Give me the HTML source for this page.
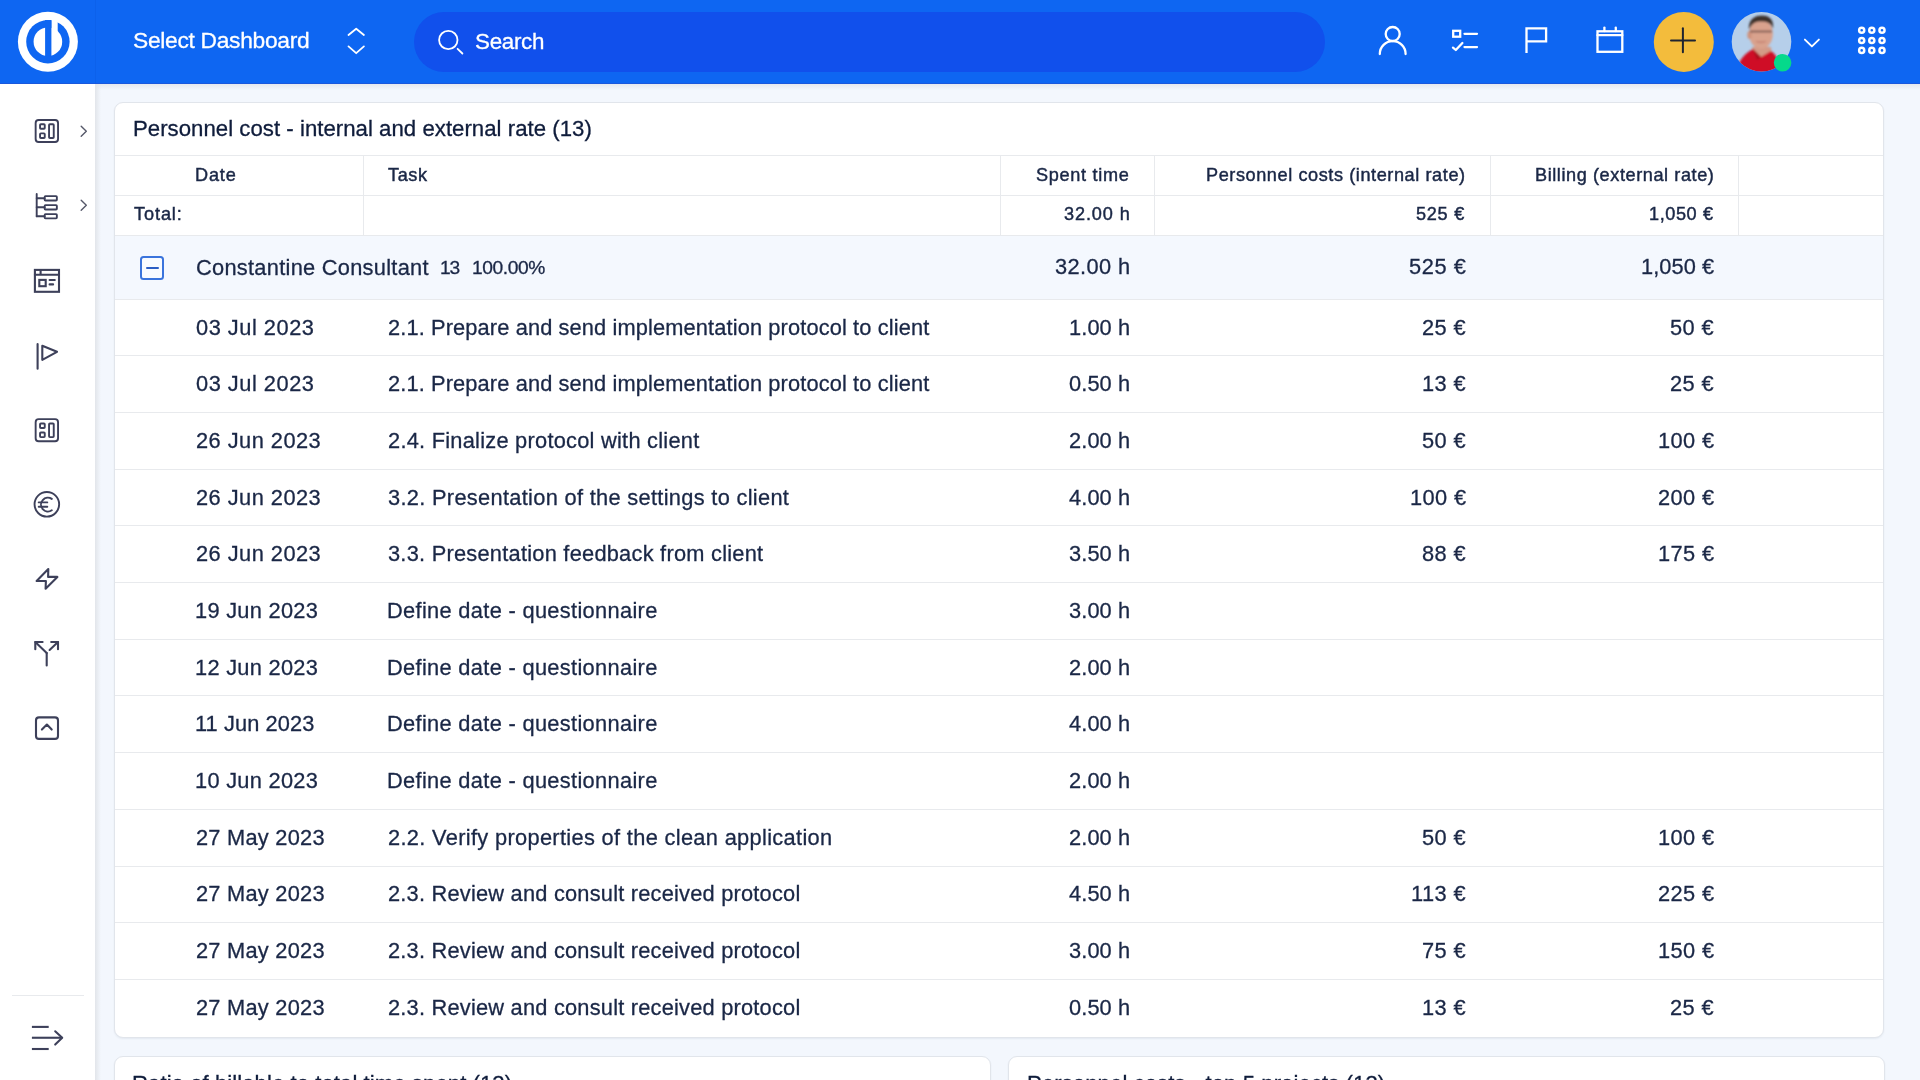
<!DOCTYPE html>
<html><head><meta charset="utf-8"><title>Personnel cost</title>
<style>
html,body{margin:0;padding:0;}
body{width:1920px;height:1080px;overflow:hidden;position:relative;background:#f3f7fd;font-family:"Liberation Sans", sans-serif;}
.t{position:absolute;white-space:nowrap;will-change:transform;}
.abs{position:absolute;}
svg{position:absolute;overflow:visible;}
</style></head><body>
<div class="abs" style="left:0;top:0;width:1920px;height:84px;background:#0e66f2;"></div>
<div class="abs" style="left:95px;top:0;width:1px;height:84px;background:#0b5de6;opacity:.6"></div>
<svg style="left:0;top:0" width="95" height="84" viewBox="0 0 95 84">
<circle cx="47.9" cy="41.7" r="30" fill="#fff"/>
<circle cx="47.9" cy="41.7" r="21.7" fill="#0e66f2"/>
<circle cx="47.9" cy="41.7" r="14.3" fill="#fff"/>
<rect x="51.4" y="15" width="6.3" height="20" fill="#fff"/>
<rect x="45.1" y="20" width="6.3" height="36" fill="#0e66f2"/>
</svg>
<svg style="left:0;top:0" width="400" height="84"><g fill="none" stroke="#fff" stroke-width="1.8" stroke-linecap="round" stroke-linejoin="round">
<polyline points="348.5,35 356.2,28.7 363.9,35"/><polyline points="348.5,46.4 356.2,53.2 363.9,46.4"/></g></svg>
<div class="abs" style="left:414px;top:12px;width:911px;height:60px;border-radius:30px;background:#1150ec;"></div>
<svg style="left:0;top:0" width="600" height="84"><g fill="none" stroke="#fff" stroke-width="1.8" stroke-linecap="round">
<circle cx="448.3" cy="40" r="9.2"/><line x1="457.6" y1="48.8" x2="462.4" y2="53.5"/></g></svg>
<svg style="left:0;top:0" width="1920" height="84"><g fill="none" stroke="#fff" stroke-width="2.3" stroke-linecap="round" stroke-linejoin="round">
<circle cx="1392.7" cy="34" r="7"/>
<path d="M1379.8 54 A12.9 12.9 0 0 1 1405.6 54"/>
<rect x="1453.2" y="30.8" width="7" height="5.9" stroke-linecap="butt" stroke-linejoin="miter"/>
<line x1="1464.5" y1="33.8" x2="1477" y2="33.8"/>
<line x1="1464.5" y1="47.1" x2="1477" y2="47.1"/>
<polyline points="1453,47.6 1455.8,50 1462.4,43"/>
<path d="M1526.5 53 V28.4 H1546.1 V41.4 H1526.5" stroke-linecap="butt" stroke-linejoin="miter"/>
<rect x="1597.5" y="31.3" width="24.8" height="20.5" stroke-linejoin="miter"/>
<line x1="1597.5" y1="35.2" x2="1622.3" y2="35.2"/>
<line x1="1604.4" y1="27.6" x2="1604.4" y2="31"/>
<line x1="1615.8" y1="27.6" x2="1615.8" y2="31"/>
</g>
<circle cx="1683.8" cy="41.9" r="30" fill="#f3bc3c"/>
<g stroke="#1f2430" stroke-width="2" stroke-linecap="round"><line x1="1671" y1="40.4" x2="1695" y2="40.4"/><line x1="1682.9" y1="28.3" x2="1682.9" y2="52.2"/></g>
<g fill="none" stroke="#fff" stroke-width="1.9" stroke-linecap="round" stroke-linejoin="round"><polyline points="1804.9,39.6 1811.9,46.4 1818.9,39.6"/></g>
<g fill="none" stroke="#fff" stroke-width="2.5">
<circle cx="1861.7" cy="30.3" r="2.55"/><circle cx="1871.8" cy="30.3" r="2.55"/><circle cx="1882" cy="30.3" r="2.55"/>
<circle cx="1861.7" cy="40.5" r="2.55"/><circle cx="1871.8" cy="40.5" r="2.55"/><circle cx="1882" cy="40.5" r="2.55"/>
<circle cx="1861.7" cy="50.4" r="2.55"/><circle cx="1871.8" cy="50.4" r="2.55"/><circle cx="1882" cy="50.4" r="2.55"/>
</g>
<defs><clipPath id="av"><circle cx="1761.5" cy="41.7" r="29.8"/></clipPath>
<filter id="bl" x="-20%" y="-20%" width="140%" height="140%"><feGaussianBlur stdDeviation="1.1"/></filter></defs>
<circle cx="1761.5" cy="41.7" r="29.8" fill="#b6cfea"/>
<g clip-path="url(#av)"><g filter="url(#bl)">
<path d="M1752 47 L1771 47 L1772 58 L1752 58 Z" fill="#d39a86"/>
<path d="M1736 76 L1740 61 Q1745 53 1753 49 L1761 57 L1771 51 Q1777 55 1778 62 L1780 76 Z" fill="#cf0c26"/>
<path d="M1753 49 L1761 57 L1757 60 Z" fill="#a8081c"/>
<ellipse cx="1761" cy="34" rx="11.8" ry="14.8" fill="#d9a28d"/>
<ellipse cx="1749.5" cy="35" rx="2.2" ry="4" fill="#cf937e"/>
<path d="M1749 30 C1748 20 1754 15.5 1762 15.5 C1770 15.5 1774 20 1773 29 C1771 23 1767 21.5 1761 21.5 C1755 21.5 1751 24 1749 30 Z" fill="#3e302b"/>
<path d="M1750 31.5 L1772 31.5" stroke="#6b4a44" stroke-width="1.6"/>
<path d="M1756 41.5 Q1761 43 1766 41.5" stroke="#c0786a" stroke-width="1.3" fill="none"/>
</g></g>
<circle cx="1782.6" cy="62.8" r="8.8" fill="#05d98b"/>
</svg>
<div class="abs" style="left:0;top:84px;width:95px;height:996px;background:#fff;"></div>
<div class="abs" style="left:95px;top:84px;width:1825px;height:6px;background:linear-gradient(to bottom,#e6e9ee,rgba(243,247,253,0));"></div>
<div class="abs" style="left:95px;top:84px;width:6px;height:996px;background:linear-gradient(to right,#e2e5ea,rgba(243,247,253,0));"></div>
<div class="abs" style="left:0;top:82.6px;width:1920px;height:1.4px;background:#1a58dc;"></div>
<svg style="left:0;top:0" width="100" height="1080"><g fill="none" stroke="#3d405a" stroke-width="2.1" stroke-linecap="round" stroke-linejoin="round">
<g id="dash1" stroke-width="1.9"><rect x="35.65" y="119.95" width="22.4" height="22.1" rx="3"/>
<rect x="40.05" y="124.25" width="4.7" height="4.5" rx="0.8"/>
<rect x="40.05" y="133.35" width="4.7" height="4.6" rx="0.8"/>
<rect x="49.05" y="124.25" width="4.7" height="13.7" rx="0.8"/></g>
<polyline points="81.2,126.3 86.3,131.3 81.2,136.3" stroke-width="1.4" stroke="#555869"/>
<g stroke-width="1.9"><line x1="36.7" y1="194" x2="36.7" y2="216.2"/>
<line x1="36.7" y1="198.3" x2="44.6" y2="198.3"/>
<line x1="36.7" y1="207.3" x2="44.6" y2="207.3"/>
<line x1="36.7" y1="216.2" x2="44.6" y2="216.2"/>
<rect x="44.65" y="196.15" width="12.2" height="4.4" rx="0.8"/>
<rect x="44.65" y="205.15" width="12.2" height="4.4" rx="0.8"/>
<rect x="44.65" y="214.15" width="12.2" height="4.2" rx="0.8"/></g>
<polyline points="81.2,200.3 86.3,205.3 81.2,210.3" stroke-width="1.4" stroke="#555869"/>
<rect x="34.9" y="269.9" width="24.1" height="21.9" stroke-linejoin="miter"/>
<line x1="34.9" y1="274.8" x2="59" y2="274.8"/>
<line x1="40.6" y1="269.9" x2="40.6" y2="274.8" stroke-linecap="butt"/>
<rect x="39.3" y="279.9" width="6.4" height="6.3" stroke-linejoin="miter"/>
<line x1="49.6" y1="280" x2="54.8" y2="280"/>
<line x1="49.6" y1="284.4" x2="53.1" y2="284.4"/>
<line x1="37.6" y1="344" x2="37.6" y2="368.8"/>
<polygon points="42.3,345.8 57,351.8 42.3,359.8"/>
<use href="#dash1" transform="translate(0,299.2)"/>
<circle cx="46.85" cy="504.3" r="12.3" stroke-width="1.9"/>
<path d="M51.8 498.9 A6.9 6.9 0 1 0 51.8 510.3" stroke-width="1.9"/>
<line x1="38.7" y1="502.4" x2="47.3" y2="502.4" stroke-width="1.9"/>
<line x1="38.7" y1="506.8" x2="47.3" y2="506.8" stroke-width="1.9"/>
<polygon points="48.3,569 36.6,581 45.9,581 45.6,588.8 57.4,576.9 48.1,576.9"/>
<line x1="46.7" y1="665.5" x2="46.7" y2="653"/>
<polyline points="46.7,653 35.3,642 "/>
<line x1="49.6" y1="650" x2="58" y2="642"/>
<polyline points="42.6,642 35.3,642 35.3,649.2"/>
<polyline points="51.2,642 58,642 58,649.2"/>
<rect x="36" y="717.4" width="22" height="21.5" rx="3"/>
<polyline points="41.9,729.6 46.9,724.6 51.7,729.6"/>
<line x1="31.9" y1="1026.9" x2="48.7" y2="1026.9" stroke-linecap="butt"/>
<line x1="31.9" y1="1049" x2="48.7" y2="1049" stroke-linecap="butt"/>
<line x1="31.9" y1="1037.75" x2="62.2" y2="1037.75" stroke-linecap="butt"/>
<polyline points="55.2,1031.3 62.2,1037.8 55.2,1044.6"/>
</g>
<rect x="12" y="995" width="72" height="1" fill="#e8eaed"/>
</svg>
<div class="abs" style="left:114px;top:101.5px;width:1768px;height:934px;border:1px solid #e1e5eb;border-radius:9px;background:#fff;box-shadow:0 1px 2px rgba(30,50,90,.07);"></div>
<div class="abs" style="left:115px;top:235.4px;width:1768px;height:63.8px;background:#f4f8fe;"></div>
<div class="abs" style="left:115px;top:155px;width:1768px;height:1px;background:#e8eaed;"></div>
<div class="abs" style="left:115px;top:195px;width:1768px;height:1px;background:#e8eaed;"></div>
<div class="abs" style="left:115px;top:235px;width:1768px;height:1px;background:#e8eaed;"></div>
<div class="abs" style="left:115px;top:299px;width:1768px;height:1px;background:#e8eaed;"></div>
<div class="abs" style="left:115px;top:355px;width:1768px;height:1px;background:#e8eaed;"></div>
<div class="abs" style="left:115px;top:412px;width:1768px;height:1px;background:#e8eaed;"></div>
<div class="abs" style="left:115px;top:469px;width:1768px;height:1px;background:#e8eaed;"></div>
<div class="abs" style="left:115px;top:525px;width:1768px;height:1px;background:#e8eaed;"></div>
<div class="abs" style="left:115px;top:582px;width:1768px;height:1px;background:#e8eaed;"></div>
<div class="abs" style="left:115px;top:639px;width:1768px;height:1px;background:#e8eaed;"></div>
<div class="abs" style="left:115px;top:695px;width:1768px;height:1px;background:#e8eaed;"></div>
<div class="abs" style="left:115px;top:752px;width:1768px;height:1px;background:#e8eaed;"></div>
<div class="abs" style="left:115px;top:809px;width:1768px;height:1px;background:#e8eaed;"></div>
<div class="abs" style="left:115px;top:866px;width:1768px;height:1px;background:#e8eaed;"></div>
<div class="abs" style="left:115px;top:922px;width:1768px;height:1px;background:#e8eaed;"></div>
<div class="abs" style="left:115px;top:979px;width:1768px;height:1px;background:#e8eaed;"></div>
<div class="abs" style="left:363px;top:155px;width:1px;height:80px;background:#e8eaed;"></div>
<div class="abs" style="left:1000px;top:155px;width:1px;height:80px;background:#e8eaed;"></div>
<div class="abs" style="left:1154px;top:155px;width:1px;height:80px;background:#e8eaed;"></div>
<div class="abs" style="left:1490px;top:155px;width:1px;height:80px;background:#e8eaed;"></div>
<div class="abs" style="left:1738px;top:155px;width:1px;height:80px;background:#e8eaed;"></div>
<div class="abs" style="left:140.2px;top:255.7px;width:24.3px;height:24.1px;box-sizing:border-box;border:2px solid #3a74dc;border-radius:3.5px;background:#f8fbff;"></div>
<div class="abs" style="left:146.3px;top:266.9px;width:12.4px;height:1.8px;border-radius:1px;background:#2b5ec4;"></div>
<div class="abs" style="left:114px;top:1055.8px;width:875px;height:100px;border:1px solid #e1e5eb;border-radius:9px;background:#fff;box-shadow:0 1px 2px rgba(30,50,90,.07);"></div>
<div class="abs" style="left:1007.5px;top:1055.8px;width:875px;height:100px;border:1px solid #e1e5eb;border-radius:9px;background:#fff;box-shadow:0 1px 2px rgba(30,50,90,.07);"></div>
<div class="t" style="left:132.80px;top:27.40px;font-size:22.8px;line-height:27px;letter-spacing:-0.304px;color:#fff;-webkit-text-stroke:0.3px currentColor;">Select Dashboard</div>
<div class="t" style="left:474.80px;top:27.54px;font-size:22.4px;line-height:27px;letter-spacing:-0.303px;color:#fff;-webkit-text-stroke:0.3px currentColor;">Search</div>
<div class="t" style="left:132.60px;top:114.81px;font-size:22.2px;line-height:27px;letter-spacing:0.027px;color:#0f1c3b;-webkit-text-stroke:0.3px currentColor;">Personnel cost - internal and external rate (13)</div>
<div class="t" style="left:195.30px;top:163.83px;font-size:18.1px;line-height:22px;letter-spacing:0.845px;color:#1a2746;-webkit-text-stroke:0.45px currentColor;">Date</div>
<div class="t" style="left:387.90px;top:163.83px;font-size:18.1px;line-height:22px;letter-spacing:0.611px;color:#1a2746;-webkit-text-stroke:0.45px currentColor;">Task</div>
<div class="t" style="left:1036.30px;top:163.83px;font-size:18.1px;line-height:22px;letter-spacing:0.716px;color:#1a2746;-webkit-text-stroke:0.45px currentColor;">Spent time</div>
<div class="t" style="left:1206.00px;top:163.83px;font-size:18.1px;line-height:22px;letter-spacing:0.590px;color:#1a2746;-webkit-text-stroke:0.45px currentColor;">Personnel costs (internal rate)</div>
<div class="t" style="left:1534.60px;top:163.83px;font-size:18.1px;line-height:22px;letter-spacing:0.588px;color:#1a2746;-webkit-text-stroke:0.45px currentColor;">Billing (external rate)</div>
<div class="t" style="left:133.80px;top:203.03px;font-size:18.1px;line-height:22px;letter-spacing:0.913px;color:#1a2746;-webkit-text-stroke:0.45px currentColor;">Total:</div>
<div class="t" style="left:1063.60px;top:203.33px;font-size:18.1px;line-height:22px;letter-spacing:0.896px;color:#1a2746;-webkit-text-stroke:0.45px currentColor;">32.00 h</div>
<div class="t" style="left:1416.00px;top:203.03px;font-size:18.1px;line-height:22px;letter-spacing:0.743px;color:#1a2746;-webkit-text-stroke:0.45px currentColor;">525 €</div>
<div class="t" style="left:1648.70px;top:203.03px;font-size:18.1px;line-height:22px;letter-spacing:0.596px;color:#1a2746;-webkit-text-stroke:0.45px currentColor;">1,050 €</div>
<div class="t" style="left:195.60px;top:254.75px;font-size:21.8px;line-height:26px;letter-spacing:0.283px;color:#1a2746;-webkit-text-stroke:0.3px currentColor;">Constantine Consultant</div>
<div class="t" style="left:440.00px;top:256.45px;font-size:19.2px;line-height:23px;letter-spacing:-1.178px;color:#1a2746;-webkit-text-stroke:0.3px currentColor;">13</div>
<div class="t" style="left:471.80px;top:256.45px;font-size:19.2px;line-height:23px;letter-spacing:-0.404px;color:#1a2746;-webkit-text-stroke:0.3px currentColor;">100.00%</div>
<div class="t" style="left:1055.10px;top:253.95px;font-size:21.8px;line-height:26px;letter-spacing:0.382px;color:#1a2746;-webkit-text-stroke:0.3px currentColor;">32.00 h</div>
<div class="t" style="left:1409.20px;top:254.05px;font-size:21.8px;line-height:26px;letter-spacing:0.568px;color:#1a2746;-webkit-text-stroke:0.3px currentColor;">525 €</div>
<div class="t" style="left:1640.70px;top:254.05px;font-size:21.8px;line-height:26px;letter-spacing:0.082px;color:#1a2746;-webkit-text-stroke:0.3px currentColor;">1,050 €</div>
<div class="t" style="left:196.10px;top:314.65px;font-size:21.8px;line-height:26px;letter-spacing:0.520px;color:#1a2746;-webkit-text-stroke:0.3px currentColor;">03 Jul 2023</div>
<div class="t" style="left:388.00px;top:314.65px;font-size:21.8px;line-height:26px;letter-spacing:0.127px;color:#1a2746;-webkit-text-stroke:0.3px currentColor;">2.1. Prepare and send implementation protocol to client</div>
<div class="t" style="left:1068.91px;top:314.65px;font-size:21.8px;line-height:26px;letter-spacing:0.100px;color:#1a2746;-webkit-text-stroke:0.3px currentColor;">1.00 h</div>
<div class="t" style="left:1422.40px;top:314.65px;font-size:21.8px;line-height:26px;letter-spacing:0.400px;color:#1a2746;-webkit-text-stroke:0.3px currentColor;">25 €</div>
<div class="t" style="left:1670.30px;top:314.65px;font-size:21.8px;line-height:26px;letter-spacing:0.400px;color:#1a2746;-webkit-text-stroke:0.3px currentColor;">50 €</div>
<div class="t" style="left:196.10px;top:371.33px;font-size:21.8px;line-height:26px;letter-spacing:0.520px;color:#1a2746;-webkit-text-stroke:0.3px currentColor;">03 Jul 2023</div>
<div class="t" style="left:388.00px;top:371.33px;font-size:21.8px;line-height:26px;letter-spacing:0.127px;color:#1a2746;-webkit-text-stroke:0.3px currentColor;">2.1. Prepare and send implementation protocol to client</div>
<div class="t" style="left:1068.91px;top:371.33px;font-size:21.8px;line-height:26px;letter-spacing:0.100px;color:#1a2746;-webkit-text-stroke:0.3px currentColor;">0.50 h</div>
<div class="t" style="left:1422.40px;top:371.33px;font-size:21.8px;line-height:26px;letter-spacing:0.400px;color:#1a2746;-webkit-text-stroke:0.3px currentColor;">13 €</div>
<div class="t" style="left:1670.30px;top:371.33px;font-size:21.8px;line-height:26px;letter-spacing:0.400px;color:#1a2746;-webkit-text-stroke:0.3px currentColor;">25 €</div>
<div class="t" style="left:195.90px;top:428.01px;font-size:21.8px;line-height:26px;letter-spacing:0.472px;color:#1a2746;-webkit-text-stroke:0.3px currentColor;">26 Jun 2023</div>
<div class="t" style="left:388.00px;top:428.01px;font-size:21.8px;line-height:26px;letter-spacing:0.253px;color:#1a2746;-webkit-text-stroke:0.3px currentColor;">2.4. Finalize protocol with client</div>
<div class="t" style="left:1068.91px;top:428.01px;font-size:21.8px;line-height:26px;letter-spacing:0.100px;color:#1a2746;-webkit-text-stroke:0.3px currentColor;">2.00 h</div>
<div class="t" style="left:1422.40px;top:428.01px;font-size:21.8px;line-height:26px;letter-spacing:0.400px;color:#1a2746;-webkit-text-stroke:0.3px currentColor;">50 €</div>
<div class="t" style="left:1657.77px;top:428.01px;font-size:21.8px;line-height:26px;letter-spacing:0.400px;color:#1a2746;-webkit-text-stroke:0.3px currentColor;">100 €</div>
<div class="t" style="left:195.90px;top:484.69px;font-size:21.8px;line-height:26px;letter-spacing:0.472px;color:#1a2746;-webkit-text-stroke:0.3px currentColor;">26 Jun 2023</div>
<div class="t" style="left:388.20px;top:484.69px;font-size:21.8px;line-height:26px;letter-spacing:0.313px;color:#1a2746;-webkit-text-stroke:0.3px currentColor;">3.2. Presentation of the settings to client</div>
<div class="t" style="left:1068.91px;top:484.69px;font-size:21.8px;line-height:26px;letter-spacing:0.100px;color:#1a2746;-webkit-text-stroke:0.3px currentColor;">4.00 h</div>
<div class="t" style="left:1409.87px;top:484.69px;font-size:21.8px;line-height:26px;letter-spacing:0.400px;color:#1a2746;-webkit-text-stroke:0.3px currentColor;">100 €</div>
<div class="t" style="left:1657.77px;top:484.69px;font-size:21.8px;line-height:26px;letter-spacing:0.400px;color:#1a2746;-webkit-text-stroke:0.3px currentColor;">200 €</div>
<div class="t" style="left:195.90px;top:541.37px;font-size:21.8px;line-height:26px;letter-spacing:0.472px;color:#1a2746;-webkit-text-stroke:0.3px currentColor;">26 Jun 2023</div>
<div class="t" style="left:388.20px;top:541.37px;font-size:21.8px;line-height:26px;letter-spacing:0.249px;color:#1a2746;-webkit-text-stroke:0.3px currentColor;">3.3. Presentation feedback from client</div>
<div class="t" style="left:1068.91px;top:541.37px;font-size:21.8px;line-height:26px;letter-spacing:0.100px;color:#1a2746;-webkit-text-stroke:0.3px currentColor;">3.50 h</div>
<div class="t" style="left:1422.40px;top:541.37px;font-size:21.8px;line-height:26px;letter-spacing:0.400px;color:#1a2746;-webkit-text-stroke:0.3px currentColor;">88 €</div>
<div class="t" style="left:1657.77px;top:541.37px;font-size:21.8px;line-height:26px;letter-spacing:0.400px;color:#1a2746;-webkit-text-stroke:0.3px currentColor;">175 €</div>
<div class="t" style="left:195.30px;top:598.05px;font-size:21.8px;line-height:26px;letter-spacing:0.282px;color:#1a2746;-webkit-text-stroke:0.3px currentColor;">19 Jun 2023</div>
<div class="t" style="left:387.30px;top:598.05px;font-size:21.8px;line-height:26px;letter-spacing:0.329px;color:#1a2746;-webkit-text-stroke:0.3px currentColor;">Define date - questionnaire</div>
<div class="t" style="left:1068.91px;top:598.05px;font-size:21.8px;line-height:26px;letter-spacing:0.100px;color:#1a2746;-webkit-text-stroke:0.3px currentColor;">3.00 h</div>
<div class="t" style="left:195.30px;top:654.73px;font-size:21.8px;line-height:26px;letter-spacing:0.282px;color:#1a2746;-webkit-text-stroke:0.3px currentColor;">12 Jun 2023</div>
<div class="t" style="left:387.30px;top:654.73px;font-size:21.8px;line-height:26px;letter-spacing:0.329px;color:#1a2746;-webkit-text-stroke:0.3px currentColor;">Define date - questionnaire</div>
<div class="t" style="left:1068.91px;top:654.73px;font-size:21.8px;line-height:26px;letter-spacing:0.100px;color:#1a2746;-webkit-text-stroke:0.3px currentColor;">2.00 h</div>
<div class="t" style="left:195.30px;top:711.41px;font-size:21.8px;line-height:26px;letter-spacing:0.104px;color:#1a2746;-webkit-text-stroke:0.3px currentColor;">11 Jun 2023</div>
<div class="t" style="left:387.30px;top:711.41px;font-size:21.8px;line-height:26px;letter-spacing:0.329px;color:#1a2746;-webkit-text-stroke:0.3px currentColor;">Define date - questionnaire</div>
<div class="t" style="left:1068.91px;top:711.41px;font-size:21.8px;line-height:26px;letter-spacing:0.100px;color:#1a2746;-webkit-text-stroke:0.3px currentColor;">4.00 h</div>
<div class="t" style="left:195.30px;top:768.09px;font-size:21.8px;line-height:26px;letter-spacing:0.282px;color:#1a2746;-webkit-text-stroke:0.3px currentColor;">10 Jun 2023</div>
<div class="t" style="left:387.30px;top:768.09px;font-size:21.8px;line-height:26px;letter-spacing:0.329px;color:#1a2746;-webkit-text-stroke:0.3px currentColor;">Define date - questionnaire</div>
<div class="t" style="left:1068.91px;top:768.09px;font-size:21.8px;line-height:26px;letter-spacing:0.100px;color:#1a2746;-webkit-text-stroke:0.3px currentColor;">2.00 h</div>
<div class="t" style="left:195.90px;top:824.77px;font-size:21.8px;line-height:26px;letter-spacing:0.248px;color:#1a2746;-webkit-text-stroke:0.3px currentColor;">27 May 2023</div>
<div class="t" style="left:388.00px;top:824.77px;font-size:21.8px;line-height:26px;letter-spacing:0.331px;color:#1a2746;-webkit-text-stroke:0.3px currentColor;">2.2. Verify properties of the clean application</div>
<div class="t" style="left:1068.91px;top:824.77px;font-size:21.8px;line-height:26px;letter-spacing:0.100px;color:#1a2746;-webkit-text-stroke:0.3px currentColor;">2.00 h</div>
<div class="t" style="left:1422.40px;top:824.77px;font-size:21.8px;line-height:26px;letter-spacing:0.400px;color:#1a2746;-webkit-text-stroke:0.3px currentColor;">50 €</div>
<div class="t" style="left:1657.77px;top:824.77px;font-size:21.8px;line-height:26px;letter-spacing:0.400px;color:#1a2746;-webkit-text-stroke:0.3px currentColor;">100 €</div>
<div class="t" style="left:195.90px;top:881.45px;font-size:21.8px;line-height:26px;letter-spacing:0.248px;color:#1a2746;-webkit-text-stroke:0.3px currentColor;">27 May 2023</div>
<div class="t" style="left:388.00px;top:881.45px;font-size:21.8px;line-height:26px;letter-spacing:0.220px;color:#1a2746;-webkit-text-stroke:0.3px currentColor;">2.3. Review and consult received protocol</div>
<div class="t" style="left:1068.91px;top:881.45px;font-size:21.8px;line-height:26px;letter-spacing:0.100px;color:#1a2746;-webkit-text-stroke:0.3px currentColor;">4.50 h</div>
<div class="t" style="left:1411.49px;top:881.45px;font-size:21.8px;line-height:26px;letter-spacing:0.400px;color:#1a2746;-webkit-text-stroke:0.3px currentColor;">113 €</div>
<div class="t" style="left:1657.77px;top:881.45px;font-size:21.8px;line-height:26px;letter-spacing:0.400px;color:#1a2746;-webkit-text-stroke:0.3px currentColor;">225 €</div>
<div class="t" style="left:195.90px;top:938.13px;font-size:21.8px;line-height:26px;letter-spacing:0.248px;color:#1a2746;-webkit-text-stroke:0.3px currentColor;">27 May 2023</div>
<div class="t" style="left:388.00px;top:938.13px;font-size:21.8px;line-height:26px;letter-spacing:0.220px;color:#1a2746;-webkit-text-stroke:0.3px currentColor;">2.3. Review and consult received protocol</div>
<div class="t" style="left:1068.91px;top:938.13px;font-size:21.8px;line-height:26px;letter-spacing:0.100px;color:#1a2746;-webkit-text-stroke:0.3px currentColor;">3.00 h</div>
<div class="t" style="left:1422.40px;top:938.13px;font-size:21.8px;line-height:26px;letter-spacing:0.400px;color:#1a2746;-webkit-text-stroke:0.3px currentColor;">75 €</div>
<div class="t" style="left:1657.77px;top:938.13px;font-size:21.8px;line-height:26px;letter-spacing:0.400px;color:#1a2746;-webkit-text-stroke:0.3px currentColor;">150 €</div>
<div class="t" style="left:195.90px;top:994.81px;font-size:21.8px;line-height:26px;letter-spacing:0.248px;color:#1a2746;-webkit-text-stroke:0.3px currentColor;">27 May 2023</div>
<div class="t" style="left:388.00px;top:994.81px;font-size:21.8px;line-height:26px;letter-spacing:0.220px;color:#1a2746;-webkit-text-stroke:0.3px currentColor;">2.3. Review and consult received protocol</div>
<div class="t" style="left:1068.91px;top:994.81px;font-size:21.8px;line-height:26px;letter-spacing:0.100px;color:#1a2746;-webkit-text-stroke:0.3px currentColor;">0.50 h</div>
<div class="t" style="left:1422.40px;top:994.81px;font-size:21.8px;line-height:26px;letter-spacing:0.400px;color:#1a2746;-webkit-text-stroke:0.3px currentColor;">13 €</div>
<div class="t" style="left:1670.30px;top:994.81px;font-size:21.8px;line-height:26px;letter-spacing:0.400px;color:#1a2746;-webkit-text-stroke:0.3px currentColor;">25 €</div>
<div class="t" style="left:132.00px;top:1069.81px;font-size:22.2px;line-height:27px;letter-spacing:0.036px;color:#0f1c3b;-webkit-text-stroke:0.3px currentColor;">Ratio of billable to total time spent (13)</div>
<div class="t" style="left:1026.90px;top:1069.81px;font-size:22.2px;line-height:27px;letter-spacing:0.050px;color:#0f1c3b;-webkit-text-stroke:0.3px currentColor;">Personnel costs - top 5 projects (13)</div>
</body></html>
